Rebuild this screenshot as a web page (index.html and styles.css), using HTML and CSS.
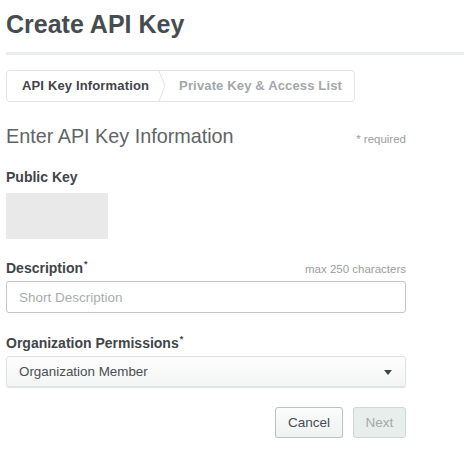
FILE: index.html
```html
<!DOCTYPE html>
<html lang="en">
<head>
<meta charset="utf-8">
<title>Create API Key</title>
<link rel="stylesheet" href="styles.css">
</head>
<body>
<div class="page">
  <h1 class="title">Create API Key</h1>
  <div class="divider"></div>

  <div class="form">
    <div class="steps">
      <div class="step step-active">API Key Information</div>
      <svg class="chev" width="8" height="30" viewBox="0 0 8 30" aria-hidden="true"><polyline points="1,0 7,15 1,30" fill="none" stroke="#dfe3e2" stroke-width="1"/></svg>
      <div class="step step-next">Private Key &amp; Access List</div>
    </div>

    <div class="section-head">
      <h2 class="section-title">Enter API Key Information</h2>
      <span class="hint">* required</span>
    </div>

    <div class="label">Public Key</div>
    <div class="key-box"></div>

    <div class="label-row">
      <div class="label">Description<sup class="req">*</sup></div>
      <span class="hint">max 250 characters</span>
    </div>
    <input class="text-input" type="text" placeholder="Short Description">

    <div class="label label-org">Organization Permissions<sup class="req">*</sup></div>
    <div class="select">
      <span>Organization Member</span>
      <span class="caret"></span>
    </div>

    <div class="actions">
      <button class="btn btn-cancel" type="button">Cancel</button>
      <button class="btn btn-next" type="button" disabled>Next</button>
    </div>
  </div>
</div>
</body>
</html>
```

FILE: styles.css
```css
html, body {
  margin: 0;
  padding: 0;
  background: #ffffff;
}

body {
  font-family: "Liberation Sans", Arial, sans-serif;
  color: #464c4f;
}

.page {
  padding-left: 6px;
}

.title {
  margin: 9px 0 0 0;
  font-size: 25px;
  line-height: 30px;
  font-weight: bold;
  color: #474c50;
}

.divider {
  margin-top: 13px;
  height: 3px;
  background: #e7eeec;
}

.form {
  width: 400px;
}

.steps {
  margin-top: 15px;
  display: flex;
  align-items: center;
  width: 349px;
  height: 32px;
  box-sizing: border-box;
  border: 1px solid #e2e6e5;
  border-radius: 4px;
}

.step {
  font-size: 13px;
  font-weight: bold;
  line-height: 30px;
  white-space: nowrap;
  letter-spacing: 0.15px;
}

.step-active {
  padding: 0 9px 0 15px;
  color: #3f4549;
}

.chev {
  display: block;
  flex: none;
}

.step-next {
  padding-left: 13px;
  color: #a3a7a9;
}

.section-head {
  margin-top: 23px;
  display: flex;
  justify-content: space-between;
  align-items: baseline;
}

.section-title {
  margin: 0;
  font-size: 19.8px;
  line-height: 22px;
  font-weight: normal;
  color: #606467;
}

.hint {
  font-size: 11.5px;
  color: #9a9ea0;
}

.label {
  margin-top: 22px;
  font-size: 14px;
  line-height: 17px;
  font-weight: bold;
  color: #3f4549;
}

.req {
  font-size: 9px;
  line-height: 0;
  vertical-align: 6px;
  margin-left: 1px;
}

.key-box {
  margin-top: 7px;
  width: 102px;
  height: 46px;
  background: #e9e9e9;
}

.label-row {
  margin-top: 21px;
  display: flex;
  justify-content: space-between;
  align-items: baseline;
}

.label-row .label {
  margin-top: 0;
}

.text-input {
  display: block;
  margin-top: 4px;
  width: 400px;
  height: 32px;
  box-sizing: border-box;
  border: 1px solid #c2c6c8;
  border-radius: 3px;
  padding: 0 12px;
  font-family: "Liberation Sans", Arial, sans-serif;
  font-size: 13.5px;
  color: #464c4f;
  background: #fff;
  outline: none;
}

.text-input::placeholder {
  color: #a9adaf;
}

.label-org {
  margin-top: 22px;
}

.select {
  margin-top: 4px;
  height: 31px;
  box-sizing: border-box;
  border: 1px solid #dfe3e2;
  border-radius: 3px;
  padding: 0 13px 0 12px;
  display: flex;
  align-items: center;
  justify-content: space-between;
  font-size: 13.4px;
  color: #4a4f52;
  background: linear-gradient(#fdfdfd, #f3f5f4);
  box-shadow: 0 1px 1px rgba(0, 0, 0, 0.12);
}

.caret {
  width: 0;
  height: 0;
  border-left: 4.5px solid transparent;
  border-right: 4.5px solid transparent;
  border-top: 5px solid #3f4549;
  margin-top: 1px;
}

.actions {
  margin-top: 20px;
  display: flex;
  justify-content: flex-end;
  gap: 10px;
}

.btn {
  height: 31px;
  box-sizing: border-box;
  border-radius: 3px;
  font-family: "Liberation Sans", Arial, sans-serif;
  font-size: 13.5px;
  padding: 0;
}

.btn-cancel {
  width: 68px;
  border: 1px solid #b9c3c1;
  background: linear-gradient(#fbfcfc, #eef2f1);
  color: #464c4f;
  box-shadow: 0 1px 1px rgba(0, 0, 0, 0.15);
}

.btn-next {
  width: 53px;
  border: 1px solid #cfd7d5;
  background: #e8eeec;
  color: #a2aaa9;
}
```
